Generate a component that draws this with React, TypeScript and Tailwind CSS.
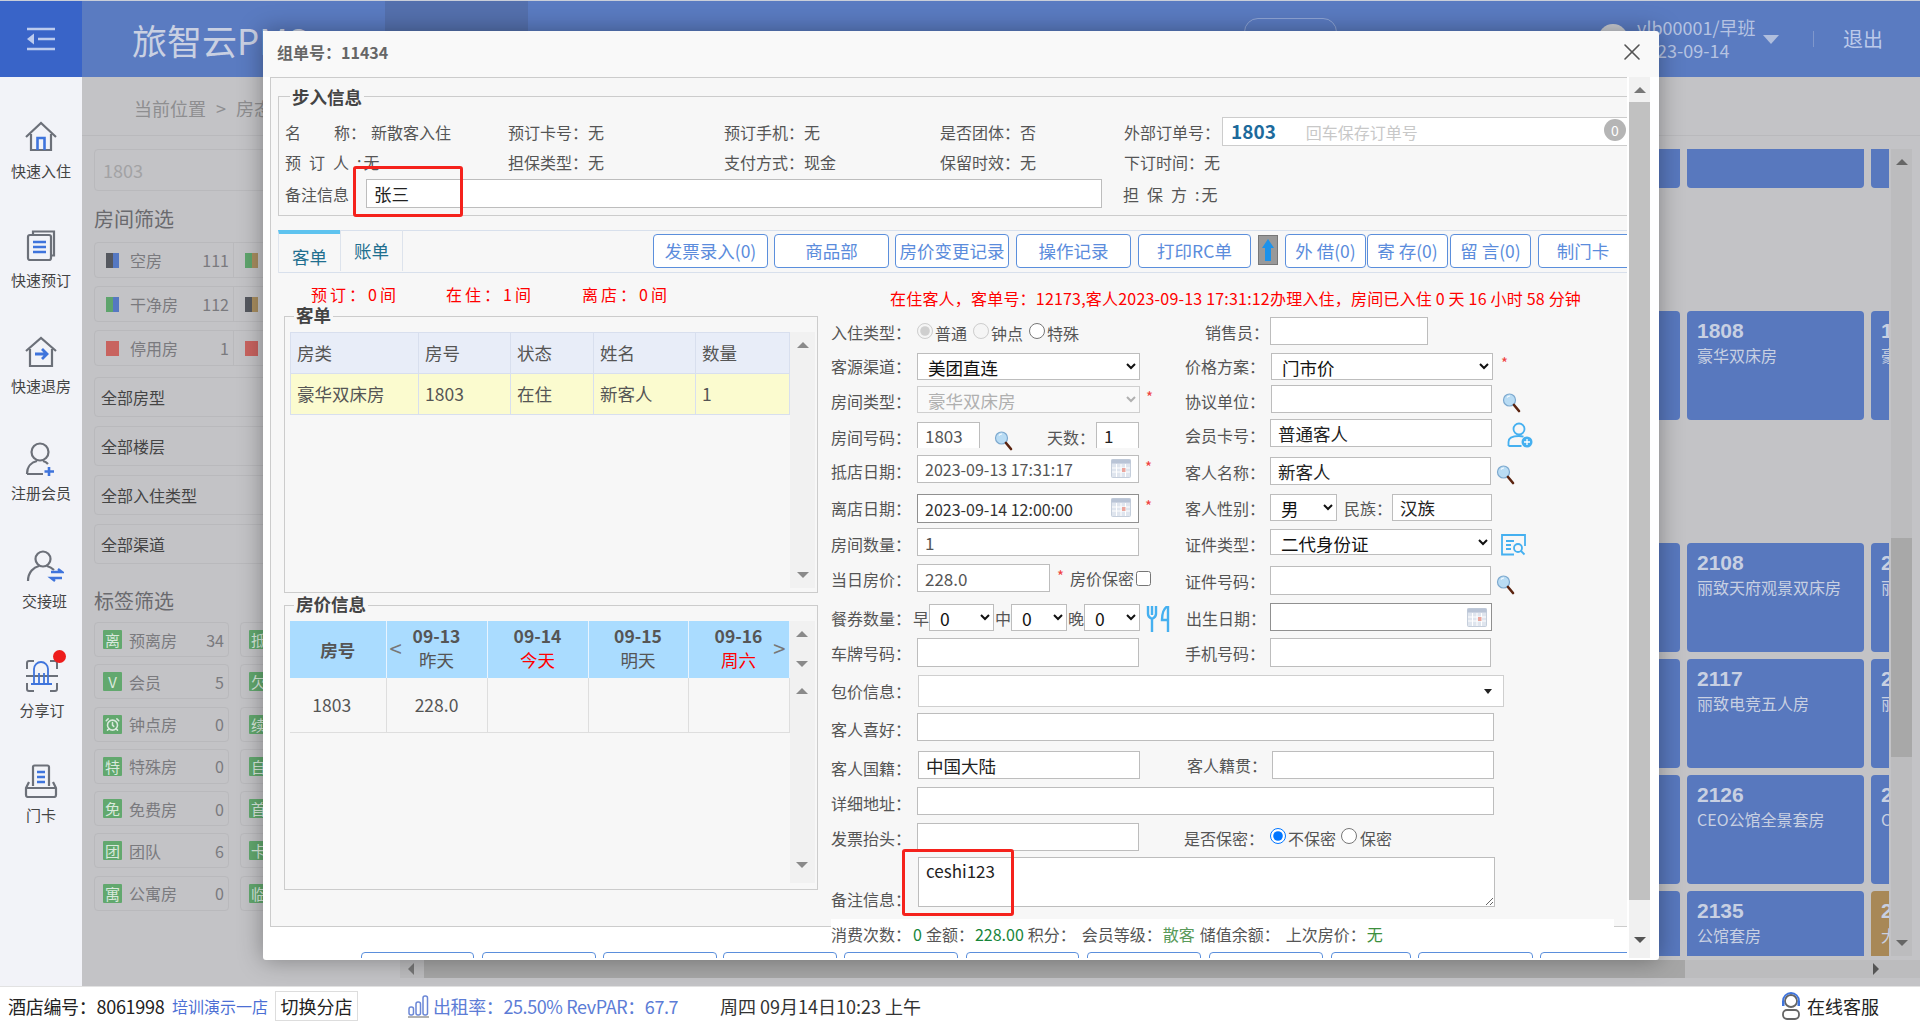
import { AlarmClock, X } from "lucide-react";
import type { ReactNode } from "react";

const SideIcon = ({ name }: { name: string }) => {
  const gray = "#6c7079";
  const blue = "#3f74dc";
  if (name === "in")
    return (
      <svg width="34" height="32" viewBox="0 0 34 32" fill="none" strokeWidth="2.2" stroke={gray}>
        <path d="M2 16 17 2l15 14" />
        <path d="M7 13v16h20V13" />
        <path d="M13.5 29V17h7v12" stroke={blue} strokeWidth="2.6" />
      </svg>
    );
  if (name === "book")
    return (
      <svg width="30" height="32" viewBox="0 0 30 32" fill="none" strokeWidth="2.2" stroke={gray}>
        <path d="M7 4V1.5h21v24h-3" />
        <rect x="2" y="5" width="23" height="25" rx="2" />
        <path d="M7 12h13M7 17h13M7 22h13" stroke={blue} strokeWidth="2.4" />
      </svg>
    );
  if (name === "out")
    return (
      <svg width="34" height="32" viewBox="0 0 34 32" fill="none" strokeWidth="2.2" stroke={gray}>
        <path d="M2 15 17 2l15 13" />
        <path d="M6 13v17h22V13" />
        <path d="M11 18h11M18 13l5 5-5 5" stroke={blue} strokeWidth="2.8" />
      </svg>
    );
  if (name === "reg")
    return (
      <svg width="32" height="34" viewBox="0 0 32 34" fill="none" strokeWidth="2.2" stroke={gray}>
        <circle cx="15" cy="10" r="8.5" />
        <path d="M2 32c0-8 5-12 10-13M18 19c2 .5 3.5 1.3 5 3M2 32h16" />
        <path d="M24 25v9M19.500 29.500h9.500" stroke={blue} strokeWidth="2.6" />
      </svg>
    );
  if (name === "shift")
    return (
      <svg width="38" height="34" viewBox="0 0 38 34" fill="none" strokeWidth="2.2" stroke={gray}>
        <circle cx="17" cy="9" r="7.500" />
        <path d="M2 31c0-9 6-14 11-15M21 16c3 .8 5 2 7 4" />
        <path d="M25 22h11l-4-3M36 28H25l4 3" stroke={blue} strokeWidth="2.4" />
      </svg>
    );
  if (name === "share")
    return (
      <svg width="34" height="34" viewBox="0 0 34 34" fill="none" strokeWidth="2" stroke={gray}>
        <path d="M2 10V4a2 2 0 0 1 2-2h5M25 2h5a2 2 0 0 1 2 2v6M2 24v6a2 2 0 0 0 2 2h5M25 32h5a2 2 0 0 0 2-2v-6" />
        <path d="M1 17h32" />
        <path d="M9 25V10a7 7 0 0 1 14 0v15M6 25h21M14 14v11M19 14v11" stroke={blue} strokeWidth="1.800" />
      </svg>
    );
  return (
    <svg width="34" height="34" viewBox="0 0 34 34" fill="none" strokeWidth="2.200" stroke={gray}>
      <path d="M9 22V3a1.500 1.500 0 0 1 1.500-1.500h13A1.500 1.500 0 0 1 25 3v19" />
      <path d="M13 8h8M13 13h8M13 18h8" stroke={blue} strokeWidth="2.400" />
      <path d="M5 18 2 24v7a2 2 0 0 0 2 2h26a2 2 0 0 0 2-2v-7l-3-6M2 24h30" />
    </svg>
  );
};

const Search = ({ className = "" }: { className?: string }) => (
  <svg width="19" height="21" viewBox="0 0 19 21" className={`shrink-0 ${className}`}>
    <circle cx="7.500" cy="8" r="6" fill="#b9dcf4" stroke="#7da9cf" strokeWidth="1.200" />
    <path d="M5 5.500a3.500 3.500 0 0 1 3-1.500" stroke="#fff" strokeWidth="1.200" fill="none" />
    <path d="m12 13 5 6" stroke="#5c2410" strokeWidth="2.600" strokeLinecap="round" />
  </svg>
);

const Calendar = () => (
  <svg width="20" height="19" viewBox="0 0 20 19">
    <rect x="0.500" y="0.500" width="19" height="18" rx="1" fill="#dfe5ee" stroke="#c5cedb" />
    <rect x="0.500" y="0.500" width="19" height="4" fill="#b9c4d6" />
    <path d="M1 9h18M1 13h18M5.500 5v13M10 5v13M14.500 5v13" stroke="#fff" strokeWidth="1" />
    <rect x="11" y="9" width="3.500" height="4" fill="#eba59c" />
  </svg>
);

const Lbl = ({ children, className = "w-[86px]" }: { children: ReactNode; className?: string }) => (
  <span className={`shrink-0 text-[16px] leading-[28px] whitespace-nowrap text-[#555] ${className}`}>{children}</span>
);

const Star = ({ className = "" }: { className?: string }) => (
  <span className={`text-[15px] leading-[20px] text-[#f04040] ${className}`}>*</span>
);

const input = "shrink-0 border border-[#bdbdbd] bg-white px-[7px] text-[17px] text-[#555] outline-none";
const inputDark = "shrink-0 border border-[#bdbdbd] bg-white px-[7px] text-[17.5px] text-[#222] outline-none";
const selectCls = "shrink-0 border border-[#bdbdbd] bg-white pl-[6px] text-[17.5px] text-[#111] outline-none";

const Radio = ({ checked, disabled, name }: { checked?: boolean; disabled?: boolean; name: string }) => (
  <input type="radio" name={name} defaultChecked={checked} disabled={disabled} className="mx-0 mb-[5px] h-[16px] w-[16px] shrink-0" />
);

const Arrow = ({ up, className = "" }: { up?: boolean; className?: string }) => (
  <span
    className={`block h-0 w-0 border-x-[6px] border-x-transparent ${
      up ? "border-b-[6px] border-b-[#8a8a8a]" : "border-t-[6px] border-t-[#8a8a8a]"
    } ${className}`}
  />
);

const roomFilters = [
  { name: "空房", count: 111, a: "bg-[#55585f]", b: "bg-[#5578c2]", c: "bg-[#5ea46c]", d: "bg-[#a88d5f]" },
  { name: "干净房", count: 112, a: "bg-[#5ea46c]", b: "bg-[#5578c2]", c: "bg-[#55585f]", d: "bg-[#a88d5f]" },
  { name: "停用房", count: 1, a: "bg-[#c8635f]", b: "bg-[#c8635f]", c: "bg-[#c8635f]", d: "bg-[#c8635f]" },
];

const tags = [
  { ch: "离", name: "预离房", count: 34, ch2: "抵" },
  { ch: "V", name: "会员", count: 5, ch2: "欠" },
  { ch: "", name: "钟点房", count: 0, ch2: "续" },
  { ch: "特", name: "特殊房", count: 0, ch2: "自" },
  { ch: "免", name: "免费房", count: 0, ch2: "首" },
  { ch: "团", name: "团队", count: 6, ch2: "卡" },
  { ch: "寓", name: "公寓房", count: 0, ch2: "临" },
];

const roomRows = [
  { cls: "h-[39px] rounded-b-[4px]", cards: ["", "", ""] },
  { cls: "mt-[123px] h-[109px] rounded-[4px]", cards: [["1807", "豪华双床房"], ["1808", "豪华双床房"], ["1809", "豪华双床房"]] },
  { cls: "mt-[123px] h-[109px] rounded-[4px]", cards: [["2107", "丽致观景房"], ["2108", "丽致天府观景双床房"], ["2109", "丽致观景房"]] },
  { cls: "mt-[7px] h-[109px] rounded-[4px]", cards: [["2116", "丽致电竞房"], ["2117", "丽致电竞五人房"], ["2118", "丽致电竞房"]] },
  { cls: "mt-[7px] h-[109px] rounded-[4px]", cards: [["2125", "CEO公馆"], ["2126", "CEO公馆全景套房"], ["2127", "CEO公馆"]] },
  { cls: "mt-[7px] h-[109px] rounded-[4px]", cards: [["2134", "公馆套房"], ["2135", "公馆套房"], ["2136", "大床房"]] },
];

const sideItems = [
  { icon: "in", label: "快速入住", cls: "h-[108px] pt-[42px]" },
  { icon: "book", label: "快速预订", cls: "h-[108px] pt-[43px]" },
  { icon: "out", label: "快速退房", cls: "h-[108px] pt-[41px]" },
  { icon: "reg", label: "注册会员", cls: "h-[108px] pt-[40px]" },
  { icon: "shift", label: "交接班", cls: "h-[108px] pt-[40px] pl-[7px]" },
  { icon: "share", label: "分享订", cls: "h-[108px] pt-[41px] pl-[2px]" },
  { icon: "card", label: "门卡", cls: "h-[108px] pt-[38px]" },
];

const App = () => {
  return (
    <div className="relative flex h-[1025px] w-[1920px] flex-col overflow-hidden bg-[#c3c3c6] font-['Noto_Sans_CJK_SC','Liberation_Sans',sans-serif]">
      <header className="flex h-[77px] shrink-0 items-center border-t border-[#c9ced9] bg-[#5a7bc1]">
        <div className="flex h-full w-[82px] shrink-0 items-center justify-center bg-[#3964c8]">
          <svg width="28" height="24" viewBox="0 0 28 24" fill="none" stroke="#bccbee" strokeWidth="2.500">
            <path d="M0 2h28M11 12h17M0 22h28" />
            <path d="M7 6.500v11L0 12z" fill="#bccbee" stroke="none" />
          </svg>
        </div>
        <div className="ml-[50px] w-[253px] text-[35px] leading-none whitespace-nowrap text-[#c9d0e2]">旅智云PMS</div>
        <div className="h-full w-[143px] bg-[#5470ad]" />
        <div className="ml-auto flex h-full items-center pr-[37px]">
          <div className="mb-[8px] h-[34px] w-[93px] rounded-[14px] border border-[#8fa5d5]" />
          <div className="ml-[261px] h-[30px] w-[30px] rounded-full bg-[#c9ccd2]" />
          <div className="ml-[9px] w-[124px] text-[18px] leading-[23px] text-[#b6c3e2]">
            <div>vlb00001/早班</div>
            <div>2023-09-14</div>
          </div>
          <div className="ml-[2px] h-0 w-0 border-x-[8px] border-t-[9px] border-x-transparent border-t-[#b0bedd]" />
          <div className="ml-[34px] h-[16px] w-px bg-[#7f97cc]" />
          <div className="ml-[29px] text-[20px] leading-none text-[#bccaea]">退出</div>
        </div>
      </header>

      <div className="flex min-h-0 flex-1">
        <aside className="w-[82px] shrink-0 bg-[#f2f3f8]">
          {sideItems.map((s) => (
            <div key={s.label} className={`relative flex flex-col items-center text-[15px] text-[#444] ${s.cls}`}>
              <div className="relative flex h-[36px] items-center">
                <SideIcon name={s.icon} />
                {s.icon === "share" && <span className="absolute top-[-8px] right-[-7px] h-[13px] w-[13px] rounded-full bg-[#ee1c1c]" />}
              </div>
              <div className="mt-[6px] leading-[20px]">{s.label}</div>
            </div>
          ))}
        </aside>

        <main className="flex min-w-0 flex-1 flex-col">
          <div className="flex h-[59px] shrink-0 items-center border-b border-[#b9b9bc] pt-[4px] pl-[52px] text-[18px] text-[#8e8e90]">
            当前位置
            <span className="mx-[10px]">&gt;</span>
            房态图
          </div>
          <div className="flex min-h-0 flex-1">
            <div className="w-[300px] shrink-0 pt-[13px] pl-[12px]">
              <div className="flex h-[42px] w-[290px] items-center rounded-[4px] border border-[#b9b9bc] pl-[8px] text-[18px] text-[#a2a2a4]">1803</div>
              <div className="mt-[16px] h-[24px] text-[20px] leading-[24px] text-[#6a6a6e]">房间筛选</div>
              <div className="mt-[11px] flex flex-col gap-[8px]">
                {roomFilters.map((f) => (
                  <div key={f.name} className="flex h-[36px] w-[290px] rounded-[4px] border border-[#b9b9bc]">
                    <div className="flex w-[139px] items-center border-r border-[#b9b9bc] pr-[4px] pl-[11px] text-[16px] text-[#7a7a7e]">
                      <span className={`h-[15px] w-[6.500px] ${f.a}`} />
                      <span className={`h-[15px] w-[6.500px] ${f.b}`} />
                      <span className="ml-[11px]">{f.name}</span>
                      <span className="ml-auto">{f.count}</span>
                    </div>
                    <div className="flex items-center pl-[11px]">
                      <span className={`h-[15px] w-[6.500px] ${f.c}`} />
                      <span className={`h-[15px] w-[6.500px] ${f.d}`} />
                    </div>
                  </div>
                ))}
              </div>
              <div className="mt-[11px] flex flex-col gap-[9px]">
                {["全部房型", "全部楼层", "全部入住类型", "全部渠道"].map((t) => (
                  <div key={t} className="flex h-[40px] w-[290px] items-center rounded-[4px] border border-[#b9b9bc] pl-[6px] text-[16px] text-[#444]">
                    {t}
                  </div>
                ))}
              </div>
              <div className="mt-[25px] h-[24px] text-[20px] leading-[24px] text-[#6a6a6e]">标签筛选</div>
              <div className="mt-[9px] flex flex-col gap-[7.300px]">
                {tags.map((t) => (
                  <div key={t.name} className="flex gap-[11px]">
                    <div className="flex h-[35px] w-[135px] items-center rounded-[4px] border border-[#b9b9bc] pr-[4px] pl-[8px] text-[16px] text-[#7a7a7e]">
                      <span className="flex h-[19px] w-[19px] items-center justify-center rounded-[1px] bg-[#62a86e] text-[15px] leading-none text-[#d8e8dc]">
                        {t.ch || <AlarmClock size={15} strokeWidth={2.500} />}
                      </span>
                      <span className="ml-[7px]">{t.name}</span>
                      <span className="ml-auto">{t.count}</span>
                    </div>
                    <div className="flex h-[35px] w-[135px] items-center rounded-[4px] border border-[#b9b9bc] pl-[8px]">
                      <span className="flex h-[19px] w-[19px] items-center justify-center rounded-[1px] bg-[#62a86e] text-[15px] leading-none text-[#d8e8dc]">{t.ch2}</span>
                    </div>
                  </div>
                ))}
              </div>
            </div>

            <div className="ml-auto h-[820px] w-[386px] shrink-0 overflow-hidden pt-[13px]">
              {roomRows.map((r, i) => (
                <div key={i} className="flex gap-[7px]">
                  {r.cards.map((c, j) => (
                    <div
                      key={j}
                      className={`w-[177px] shrink-0 pt-[8px] pl-[10px] text-[#c8d0e2] ${r.cls} ${i === 5 && j === 2 ? "bg-[#a88857]" : "bg-[#5878be]"}`}
                    >
                      {c && (
                        <>
                          <div className="font-['Liberation_Sans'] text-[21px] leading-[24px] font-bold">{c[0]}</div>
                          <div className="mt-px text-[16px] leading-[22px] whitespace-nowrap">{c[1]}</div>
                        </>
                      )}
                    </div>
                  ))}
                </div>
              ))}
            </div>
            <div className="mt-[13px] mr-[8px] ml-[2px] flex h-[807px] w-[21px] shrink-0 flex-col items-center bg-[#bcbcbe]">
              <Arrow up className="mt-[10px] mb-[373px] !border-b-[#666]" />
              <div className="h-[219px] w-full bg-[#a8a8a8]" />
              <Arrow className="mt-auto mb-[10px] !border-t-[#666]" />
            </div>
          </div>
          <div className="mb-[8px] ml-[318px] flex h-[18px] shrink-0 items-center bg-[#bcbcbe]">
            <span className="ml-[8px] h-0 w-0 border-y-[6px] border-r-[6px] border-y-transparent border-r-[#777]" />
            <div className="ml-[10px] h-full w-[1261px] bg-[#a6a6a6]" />
            <span className="ml-[188px] h-0 w-0 border-y-[6px] border-l-[6px] border-y-transparent border-l-[#555]" />
          </div>
        </main>
      </div>

      <footer className="flex h-[39px] shrink-0 items-center border-t border-[#e2e2e2] bg-white pl-[8px] text-[18px] text-[#222]">
        <span className="w-[164px] tracking-[-0.3px]">酒店编号：8061998</span>
        <span className="w-[103px] text-[16px] text-[#4c6fd4]">培训演示一店</span>
        <span className="flex h-[30px] w-[83px] items-center justify-center border border-[#ddd]">切换分店</span>
        <svg width="21" height="24" viewBox="0 0 21 24" fill="none" stroke="#6b87d6" strokeWidth="1.500" className="ml-[50px]">
          <rect x="1" y="13" width="4.500" height="8" rx="2" />
          <rect x="8" y="8" width="4.500" height="13" rx="2" />
          <rect x="15" y="2" width="4.500" height="19" rx="2" />
          <path d="M0 23h21" stroke="#999" />
        </svg>
        <span className="ml-[4px] w-[287px] tracking-[-0.4px] text-[#5c7cd6]">出租率：25.50% RevPAR：67.7</span>
        <span className="text-[#333]">周四 09月14日10:23 上午</span>
        <svg width="22" height="28" viewBox="0 0 22 28" fill="none" stroke="#666" strokeWidth="1.800" className="ml-auto">
          <circle cx="11" cy="9" r="6" />
          <path d="M3 11V9a8 8 0 0 1 16 0v2" stroke="#3f74dc" />
          <rect x="2" y="9" width="2.500" height="5" fill="#3f74dc" stroke="none" />
          <rect x="17.500" y="9" width="2.500" height="5" fill="#3f74dc" stroke="none" />
          <rect x="3" y="18" width="16" height="9" rx="4" />
        </svg>
        <span className="mr-[41px] ml-[5px]">在线客服</span>
      </footer>

      {/* 入住弹窗 */}
      <div className="absolute top-[31px] left-[263px] flex h-[929px] w-[1396px] flex-col rounded-tr-[6px] rounded-b-[3px] bg-white shadow-[0_0_24px_rgba(0,0,0,0.35)]">
        <div className="flex h-[46px] shrink-0 items-center justify-between rounded-t-[3px] bg-[#f9f9f9] pr-[13px] pb-[5px] pl-[14px]">
          <span className="text-[16px] font-bold text-[#666]">组单号：11434</span>
          <X size={28} strokeWidth={1.400} className="text-[#555]" />
        </div>
        <div className="flex min-h-0 flex-1 pl-[7px]">
          <div className="h-[881px] w-[1357px] shrink-0 overflow-hidden">
            <div className="h-[850px] border-y border-l border-[#ccc] bg-[#f7f7f7] pl-[7px]">
              <fieldset className="mt-[6px] h-[132px] w-[1370px] border border-[#ccc] px-[6px]">
                <legend className="ml-[5px] h-[24px] px-[2px] text-[17.500px] leading-[26px] font-bold text-[#444]">步入信息</legend>
                <div className="flex h-[35px] items-center pt-[12px] text-[16px] whitespace-nowrap text-[#555]">
                  <span className="flex w-[223px]">
                    <span className="w-[49px]">名</span>
                    <span className="w-[37px]">称：</span>
                    新散客入住
                  </span>
                  <span className="w-[216px]">预订卡号：无</span>
                  <span className="w-[216px]">预订手机：无</span>
                  <span className="w-[184px]">是否团体：否</span>
                  <span className="w-[98px]">外部订单号：</span>
                  <div className="relative flex h-[29px] w-[410px] items-center border border-[#ccc] bg-white">
                    <span className="ml-[8px] text-[19px] font-bold text-[#1d6a9c]">1803</span>
                    <span className="ml-[30px] text-[16px] text-[#c8c8c8]">回车保存订单号</span>
                    <span className="absolute top-[1px] left-[381px] flex h-[22px] w-[22px] items-center justify-center rounded-full bg-[#b5b5b5] text-[14px] text-white">0</span>
                  </div>
                </div>
                <div className="mt-[3px] flex h-[32px] items-center text-[16px] whitespace-nowrap text-[#555]">
                  <span className="flex w-[223px]">
                    <span className="tracking-[8px]">预订人</span>:<span className="ml-[2px]">无</span>
                  </span>
                  <span className="w-[216px]">担保类型：无</span>
                  <span className="w-[216px]">支付方式：现金</span>
                  <span className="w-[184px]">保留时效：无</span>
                  <span>下订时间：无</span>
                </div>
                <div className="mt-px flex h-[29px] items-center text-[16px] whitespace-nowrap text-[#555]">
                  <span className="w-[81px]">备注信息</span>
                  <input readOnly defaultValue="张三" className="h-[29px] w-[736px] border border-[#bdbdbd] bg-white px-[7px] text-[17.500px] text-[#222] outline-none" />
                  <span className="ml-[21px] flex">
                    <span className="tracking-[8px]">担保方</span>:<span className="ml-[2px]">无</span>
                  </span>
                </div>
              </fieldset>

              <div className="mt-[14px] flex h-[43px] w-[1350px] border-y border-[#d8e0ec]">
                <div className="-mt-px h-[43px] w-[62px] shrink-0 border-t-4 border-l border-[#dfe4ec] border-t-[#5ec3ef] pt-[10px] text-center text-[17.500px] text-[#1f6f8f]">客单</div>
                <div className="-mt-px h-[41px] w-[63px] shrink-0 border-x border-[#dde3ec] pt-[8px] text-center text-[17.500px] text-[#1f6f8f]">账单</div>
                <TabButtons />
              </div>

              <div className="flex h-[31px] w-[1350px] text-[16px] whitespace-nowrap text-[#f00]">
                <span className="mt-[9px] ml-[33px] w-[135px] tracking-[3px]">预订：0间</span>
                <span className="mt-[9px] w-[136px] tracking-[3px]">在住：1间</span>
                <span className="mt-[9px] w-[308px] tracking-[3px]">离店：0间</span>
                <span className="mt-[13px] tracking-[0.2px]">在住客人，客单号：12173,客人2023-09-13 17:31:12办理入住，房间已入住 0 天 16 小时 58 分钟</span>
              </div>

              <div className="flex">
                <div className="ml-[6px] w-[534px] shrink-0">
                  <fieldset className="h-[289px] w-[534px] border border-[#ccc] pl-[5px]">
                    <legend className="ml-[4px] h-[24px] px-[2px] text-[17.500px] leading-[22px] font-bold text-[#444]">客单</legend>
                    <div className="mt-[4px] flex">
                      <table className="h-[82px] w-[499px] table-fixed border-collapse self-start text-[17.500px] text-[#555]">
                        <colgroup>
                          <col className="w-[128px]" />
                          <col className="w-[92px]" />
                          <col className="w-[83px]" />
                          <col className="w-[102px]" />
                          <col className="w-[94px]" />
                        </colgroup>
                        <thead>
                          <tr className="h-[41px] bg-[#e8edf8]">
                            {["房类", "房号", "状态", "姓名", "数量"].map((t) => (
                              <th key={t} className="border border-[#d8dfee] pl-[6px] text-left font-normal">
                                {t}
                              </th>
                            ))}
                          </tr>
                        </thead>
                        <tbody>
                          <tr className="h-[41px] bg-[#fbfbcf]">
                            {["豪华双床房", "1803", "在住", "新客人", "1"].map((t) => (
                              <td key={t} className="border border-[#d8dfee] pl-[6px]">
                                {t}
                              </td>
                            ))}
                          </tr>
                        </tbody>
                      </table>
                      <div className="flex h-[256px] w-[25px] flex-col items-center justify-between bg-[#f1f1f1] py-[10px]">
                        <Arrow up />
                        <Arrow />
                      </div>
                    </div>
                  </fieldset>
                  <fieldset className="h-[297px] w-[534px] border border-[#ccc] pl-[5px]">
                    <legend className="ml-[4px] h-[24px] px-[2px] text-[17.500px] leading-[22px] font-bold text-[#444]">房价信息</legend>
                    <div className="mt-[4px] flex">
                      <table className="h-[111px] w-[499px] table-fixed border-collapse self-start text-[#555]">
                        <colgroup>
                          <col className="w-[96px]" />
                          <col className="w-[101px]" />
                          <col className="w-[101px]" />
                          <col className="w-[100px]" />
                          <col className="w-[101px]" />
                        </colgroup>
                        <thead>
                          <tr className="h-[57px] bg-[#aadcff] text-[17.500px] leading-[24px]">
                            <th className="border-r border-[#e8f4ff] font-bold">房号</th>
                            <DayHead date="09-13" day="昨天" prev />
                            <DayHead date="09-14" day="今天" red />
                            <DayHead date="09-15" day="明天" />
                            <DayHead date="09-16" day="周六" red next />
                          </tr>
                        </thead>
                        <tbody>
                          <tr className="h-[54px] border-b border-[#dedede] text-center text-[17.500px]">
                            <td className="border-r border-[#dedede] pr-[12px]">1803</td>
                            <td className="border-r border-[#dedede]">228.0</td>
                            <td className="border-r border-[#dedede]" />
                            <td className="border-r border-[#dedede]" />
                            <td className="border-r border-[#dedede]" />
                          </tr>
                        </tbody>
                      </table>
                      <div className="flex h-[262px] w-[25px] flex-col items-center bg-[#f1f1f1] pt-[10px]">
                        <Arrow up />
                        <Arrow className="mt-[24px]" />
                        <Arrow up className="mt-[21px]" />
                        <Arrow className="mt-auto mb-[15px]" />
                      </div>
                    </div>
                  </fieldset>
                </div>

                <div className="mt-[13px] ml-[13px] w-[700px]">
                  <GuestForm />
                </div>
              </div>
            </div>

            <div className="flex h-[30px]">
              <BottomButtons />
            </div>
          </div>
          <div className="ml-[2px] flex h-[881px] w-[21px] shrink-0 flex-col items-center bg-[#f1f1f1]">
            <div className="flex h-[25px] items-center">
              <Arrow up className="!border-b-[#777]" />
            </div>
            <div className="h-[798px] w-full bg-[#c1c1c1]" />
            <Arrow className="mt-auto mb-[15px] !border-t-[#555]" />
          </div>
        </div>

        <div className="pointer-events-none absolute top-[135px] left-[90px] h-[51px] w-[110px] rounded-[3px] border-[3.500px] border-[#f5221c]" />
        <div className="pointer-events-none absolute top-[818px] left-[639px] h-[67px] w-[112px] rounded-[3px] border-[3.500px] border-[#f5221c]" />
      </div>
    </div>
  );
};

const DayHead = ({ date, day, red, prev, next }: { date: string; day: string; red?: boolean; prev?: boolean; next?: boolean }) => (
  <th className="relative border-r border-[#e8f4ff] pb-[3px] font-normal">
    {prev && <span className="absolute top-[14px] left-[3px] text-[22px] leading-[24px] text-[#777]">&lt;</span>}
    {next && <span className="absolute top-[14px] right-[3px] text-[22px] leading-[24px] text-[#777]">&gt;</span>}
    <div className="font-bold">{date}</div>
    <div className={red ? "text-[#f00]" : "text-[#555]"}>{day}</div>
  </th>
);

const TabButtons = () => {
  const cls = "flex h-[34px] shrink-0 items-center justify-center rounded-[4px] border border-[#5b8fdc] bg-white text-[17.500px] whitespace-nowrap text-[#5b8cdc]";
  return (
    <div className="flex shrink-0 pt-[3px]">
      <div className={`ml-[250px] w-[115px] ${cls}`}>发票录入(0)</div>
      <div className={`ml-[6px] w-[115px] ${cls}`}>商品部</div>
      <div className={`ml-[6px] w-[114px] ${cls}`}>房价变更记录</div>
      <div className={`ml-[7px] w-[115px] ${cls}`}>操作记录</div>
      <div className={`ml-[7px] w-[113px] ${cls}`}>打印RC单</div>
      <div className="mt-[1px] ml-[7px] flex h-[30px] w-[20px] shrink-0 items-center justify-center border border-[#777] bg-[#999]">
        <svg width="14" height="24" viewBox="0 0 14 24">
          <path d="M7 1 13 10H10V23H4V10H1z" fill="#1c92ea" />
        </svg>
      </div>
      <div className={`ml-[7px] w-[81px] ${cls}`}>外 借(0)</div>
      <div className={`ml-[1px] w-[81px] ${cls}`}>寄 存(0)</div>
      <div className={`ml-[2px] w-[81px] ${cls}`}>留 言(0)</div>
      <div className={`ml-[7px] w-[122px] pr-[32px] ${cls}`}>制门卡</div>
    </div>
  );
};

const BottomButtons = () => {
  const cls = "h-[30px] shrink-0 rounded-[4px] border border-[#5b8fdc] bg-white";
  return (
    <>
      <div className={`mt-[25px] ml-[91px] w-[113px] ${cls}`} />
      <div className={`mt-[25px] ml-[8px] w-[114px] ${cls}`} />
      <div className={`mt-[25px] ml-[7px] w-[114px] ${cls}`} />
      <div className={`mt-[25px] ml-[6px] w-[114px] ${cls}`} />
      <div className={`mt-[25px] ml-[7px] w-[114px] ${cls}`} />
      <div className={`mt-[25px] ml-[8px] w-[113px] ${cls}`} />
      <div className={`mt-[25px] ml-[8px] w-[114px] ${cls}`} />
      <div className={`mt-[25px] ml-[8px] w-[114px] ${cls}`} />
      <div className={`mt-[25px] ml-[8px] w-[80px] ${cls}`} />
      <div className={`mt-[25px] ml-[7px] w-[115px] ${cls}`} />
      <div className={`mt-[25px] ml-[7px] w-[120px] ${cls}`} />
    </>
  );
};

const GuestForm = () => (
  <div className="flex flex-col">
    {/* 入住类型 / 销售员 */}
    <div className="flex h-[36px]">
      <div className="flex w-[354px] shrink-0 items-start">
        <Lbl className="mt-px w-[86px]">入住类型：</Lbl>
        <div className="mt-[4px] flex items-center text-[16px] text-[#555]">
          <Radio name="stay" checked disabled />
          <span className="ml-[2px] w-[38px]">普通</span>
          <Radio name="stay" disabled />
          <span className="ml-[2px] w-[38px]">钟点</span>
          <Radio name="stay" />
          <span className="ml-[2px]">特殊</span>
        </div>
      </div>
      <Lbl className="mt-px w-[85px] pl-[20px]">销售员：</Lbl>
      <input readOnly className={`h-[28px] w-[158px] ${input}`} />
    </div>
    {/* 客源渠道 / 价格方案 */}
    <div className="flex h-[32px]">
      <div className="flex w-[354px] shrink-0 items-start">
        <Lbl className="-mt-px w-[86px]">客源渠道：</Lbl>
        <select className={`h-[27px] w-[223px] ${selectCls}`}>
          <option>美团直连</option>
        </select>
      </div>
      <Lbl className="-mt-px w-[86px]">价格方案：</Lbl>
      <select className={`h-[27px] w-[222px] ${selectCls}`}>
        <option>门市价</option>
      </select>
      <Star className="ml-[8px]" />
    </div>
    {/* 房间类型 / 协议单位 */}
    <div className="flex h-[34px]">
      <div className="flex w-[354px] shrink-0 items-start">
        <Lbl className="mt-[2px] w-[86px]">房间类型：</Lbl>
        <select disabled className="mt-px h-[27px] w-[223px] border border-[#cfcfcf] bg-[#f9f9f9] pl-[6px] text-[17.500px] text-[#b0b0b0]">
          <option>豪华双床房</option>
        </select>
        <Star className="mt-[2px] ml-[6px]" />
      </div>
      <Lbl className="mt-[2px] w-[86px]">协议单位：</Lbl>
      <input readOnly className={`h-[28px] w-[221px] ${input}`} />
      <Search className="mt-[7px] ml-[10px]" />
    </div>
    {/* 房间号码 / 会员卡号 */}
    <div className="flex h-[36px]">
      <div className="flex w-[354px] shrink-0 items-start">
        <Lbl className="mt-[4px] w-[86px]">房间号码：</Lbl>
        <input readOnly defaultValue="1803" className={`mt-[3px] h-[26px] w-[63px] border-b-0 ${input}`} />
        <Search className="mt-[11px] ml-[14px]" />
        <span className="mt-[4px] ml-[34px] text-[16px] leading-[28px] whitespace-nowrap text-[#555]">天数：</span>
        <input readOnly defaultValue="1" className={`mt-[3px] ml-px h-[26px] w-[43px] border-b-0 ${input} !text-[#222]`} />
      </div>
      <Lbl className="mt-[2px] w-[85px]">会员卡号：</Lbl>
      <input readOnly defaultValue="普通客人" className={`h-[28px] w-[222px] ${inputDark}`} />
      <svg width="26" height="26" viewBox="0 0 26 26" fill="none" stroke="#45b0f0" strokeWidth="1.800" className="mt-[3px] ml-[15px] shrink-0">
        <circle cx="12" cy="7" r="5.500" />
        <path d="M1.500 24v-4c0-4 3-6 10.500-6 2 0 3 .2 4.500.6M1.500 24h13" />
        <circle cx="20" cy="20" r="5.500" fill="#45b0f0" stroke="none" />
        <path d="M20 17v6M17 20h6" stroke="#fff" strokeWidth="1.300" />
      </svg>
    </div>
    {/* 抵店日期 / 客人名称 */}
    <div className="flex h-[39px]">
      <div className="flex w-[354px] shrink-0 items-start">
        <Lbl className="mt-[2px] w-[86px]">抵店日期：</Lbl>
        <div className="flex h-[28px] w-[222px] items-center border border-[#bdbdbd] bg-white px-[7px] text-[16px] text-[#555]">
          2023-09-13 17:31:17
          <span className="mt-[-2px] ml-auto flex">
            <Calendar />
          </span>
        </div>
        <Star className="mt-[2px] ml-[6px]" />
      </div>
      <Lbl className="mt-[3px] w-[85px]">客人名称：</Lbl>
      <input readOnly defaultValue="新客人" className={`mt-[2px] h-[28px] w-[221px] ${inputDark}`} />
      <Search className="mt-[9px] ml-[5px]" />
    </div>
    {/* 离店日期 / 客人性别 */}
    <div className="flex h-[34px]">
      <div className="flex w-[354px] shrink-0 items-start">
        <Lbl className="w-[86px]">离店日期：</Lbl>
        <div className="flex h-[29px] w-[222px] items-center border border-[#909090] bg-white px-[7px] text-[16px] text-[#333]">
          2023-09-14 12:00:00
          <span className="mt-[-2px] ml-auto flex">
            <Calendar />
          </span>
        </div>
        <Star className="mt-[2px] ml-[6px]" />
      </div>
      <Lbl className="w-[85px]">客人性别：</Lbl>
      <select className={`h-[27px] w-[67px] ${selectCls}`}>
        <option>男</option>
      </select>
      <span className="ml-[7px] shrink-0 text-[16px] leading-[28px] whitespace-nowrap text-[#555]">民族：</span>
      <input readOnly defaultValue="汉族" className={`h-[27px] w-[100px] ${inputDark}`} />
    </div>
    {/* 房间数量 / 证件类型 */}
    <div className="flex h-[36px]">
      <div className="flex w-[354px] shrink-0 items-start">
        <Lbl className="mt-[2px] w-[86px]">房间数量：</Lbl>
        <input readOnly defaultValue="1" className={`h-[28px] w-[222px] ${input}`} />
      </div>
      <Lbl className="mt-[2px] w-[85px]">证件类型：</Lbl>
      <select className={`mt-px h-[26px] w-[222px] ${selectCls}`}>
        <option>二代身份证</option>
      </select>
      <svg width="25" height="22" viewBox="0 0 25 22" fill="none" stroke="#45b0f0" strokeWidth="1.800" className="mt-[6px] ml-[9px] shrink-0">
        <path d="M13 20.500H1V1h23v11" />
        <path d="M5 7h8M5 11h5M5 15h5" />
        <circle cx="17" cy="14" r="4" />
        <path d="m20 17 3.500 3.500" />
      </svg>
    </div>
    {/* 当日房价 / 证件号码 */}
    <div className="flex h-[39px]">
      <div className="flex w-[354px] shrink-0 items-start">
        <Lbl className="mt-px w-[86px]">当日房价：</Lbl>
        <input readOnly defaultValue="228.0" className={`h-[28px] w-[133px] ${input}`} />
        <Star className="mt-[2px] ml-[7px]" />
        <span className="ml-[6px] shrink-0 text-[16px] leading-[28px] whitespace-nowrap text-[#555]">房价保密</span>
        <input type="checkbox" className="mt-[7px] ml-[2px] h-[15px] w-[15px] shrink-0" />
      </div>
      <Lbl className="mt-[3px] w-[85px]">证件号码：</Lbl>
      <input readOnly className={`mt-[2px] h-[29px] w-[221px] ${input}`} />
      <Search className="mt-[10px] ml-[5px]" />
    </div>
    {/* 餐券数量 / 出生日期 */}
    <div className="flex h-[35px]">
      <div className="flex w-[354px] shrink-0 items-start">
        <Lbl className="mt-px w-[82px]">餐券数量：</Lbl>
        <span className="mt-px shrink-0 text-[16px] leading-[28px] text-[#555]">早</span>
        <select className={`mt-px h-[27px] w-[65px] ${selectCls}`}>
          <option>0</option>
        </select>
        <span className="mt-px ml-px shrink-0 text-[16px] leading-[28px] text-[#555]">中</span>
        <select className={`mt-px h-[27px] w-[56px] ${selectCls}`}>
          <option>0</option>
        </select>
        <span className="mt-px ml-px shrink-0 text-[16px] leading-[28px] text-[#555]">晚</span>
        <select className={`mt-px h-[27px] w-[56px] ${selectCls}`}>
          <option>0</option>
        </select>
        <svg width="24" height="26" viewBox="0 0 24 26" fill="none" stroke="#45b0f0" strokeWidth="2.400" className="mt-[3px] ml-[6px] shrink-0">
          <path d="M2 0v8c0 3 2 4 4 5v13M6 0v9M10 0v8c0 3-2 4-4 5" />
          <path d="M22 0c-4 2-6 7-6 14h6M22 0v26" />
        </svg>
      </div>
      <Lbl className="mt-px w-[85px] pl-[1px]">出生日期：</Lbl>
      <div className="flex h-[28px] w-[222px] items-center justify-end border border-[#909090] bg-white pr-[2px]">
        <span className="mr-[2px] flex">
          <Calendar />
        </span>
      </div>
    </div>
    {/* 车牌号码 / 手机号码 */}
    <div className="flex h-[37px]">
      <div className="flex w-[354px] shrink-0 items-start">
        <Lbl className="mt-px w-[86px]">车牌号码：</Lbl>
        <input readOnly className={`h-[29px] w-[222px] ${input}`} />
      </div>
      <Lbl className="mt-px w-[85px]">手机号码：</Lbl>
      <input readOnly className={`h-[29px] w-[221px] ${input}`} />
    </div>
    {/* 包价信息 */}
    <div className="flex h-[38px] items-start">
      <Lbl className="mt-[2px] w-[87px]">包价信息：</Lbl>
      <div className="flex h-[32px] w-[586px] shrink-0 items-center justify-end border border-[#cfcfcf] bg-white pr-[11px]">
        <span className="h-0 w-0 border-x-[4.500px] border-t-[5px] border-x-transparent border-t-[#222]" />
      </div>
    </div>
    {/* 客人喜好 */}
    <div className="flex h-[38px] items-start">
      <Lbl className="mt-[2px] w-[86px]">客人喜好：</Lbl>
      <input readOnly className={`h-[28px] w-[577px] ${input}`} />
    </div>
    {/* 客人国籍 / 客人籍贯 */}
    <div className="flex h-[36px] items-start">
      <div className="flex w-[356px] shrink-0 items-start">
        <Lbl className="mt-[3px] w-[87px]">客人国籍：</Lbl>
        <input readOnly defaultValue="中国大陆" className={`h-[28px] w-[222px] ${inputDark}`} />
      </div>
      <Lbl className="w-[85px]">客人籍贯：</Lbl>
      <input readOnly className={`h-[28px] w-[222px] ${input}`} />
    </div>
    {/* 详细地址 */}
    <div className="flex h-[36px] items-start">
      <Lbl className="mt-[2px] w-[86px]">详细地址：</Lbl>
      <input readOnly className={`h-[28px] w-[577px] ${input}`} />
    </div>
    {/* 发票抬头 / 是否保密 */}
    <div className="flex h-[34px] items-start">
      <div className="flex w-[353px] shrink-0 items-start">
        <Lbl className="mt-px w-[86px]">发票抬头：</Lbl>
        <input readOnly className={`h-[28px] w-[222px] ${input}`} />
      </div>
      <Lbl className="mt-px w-[86px]">是否保密：</Lbl>
      <div className="mt-[3px] flex items-center text-[16px] text-[#555]">
        <Radio name="secret" checked />
        <span className="ml-[2px] w-[53px]">不保密</span>
        <Radio name="secret" />
        <span className="ml-[3px]">保密</span>
      </div>
    </div>
    {/* 备注信息 */}
    <div className="flex h-[62px] items-start">
      <Lbl className="mt-[28px] w-[87px]">备注信息：</Lbl>
      <textarea readOnly defaultValue="ceshi123" className="h-[50px] w-[577px] border border-[#bdbdbd] bg-white px-[7px] py-px text-[17px] leading-[24px] text-[#222] outline-none" />
    </div>
    <div className="flex h-[30px] w-[783px] shrink-0 items-center bg-white text-[16px] whitespace-nowrap text-[#555]">
      <span>消费次数：</span>
      <span className="ml-[2px] text-[#17853a]">0</span>
      <span className="ml-[4px]">金额：</span>
      <span className="ml-px text-[#17853a]">228.00</span>
      <span className="ml-[4px]">积分：</span>
      <span className="ml-[6px]">会员等级：</span>
      <span className="ml-px text-[#5a9a5a]">散客</span>
      <span className="ml-[5px]">储值余额：</span>
      <span className="ml-[6px]">上次房价：</span>
      <span className="ml-px text-[#3d8f3d]">无</span>
    </div>
  </div>
);

export default App;
